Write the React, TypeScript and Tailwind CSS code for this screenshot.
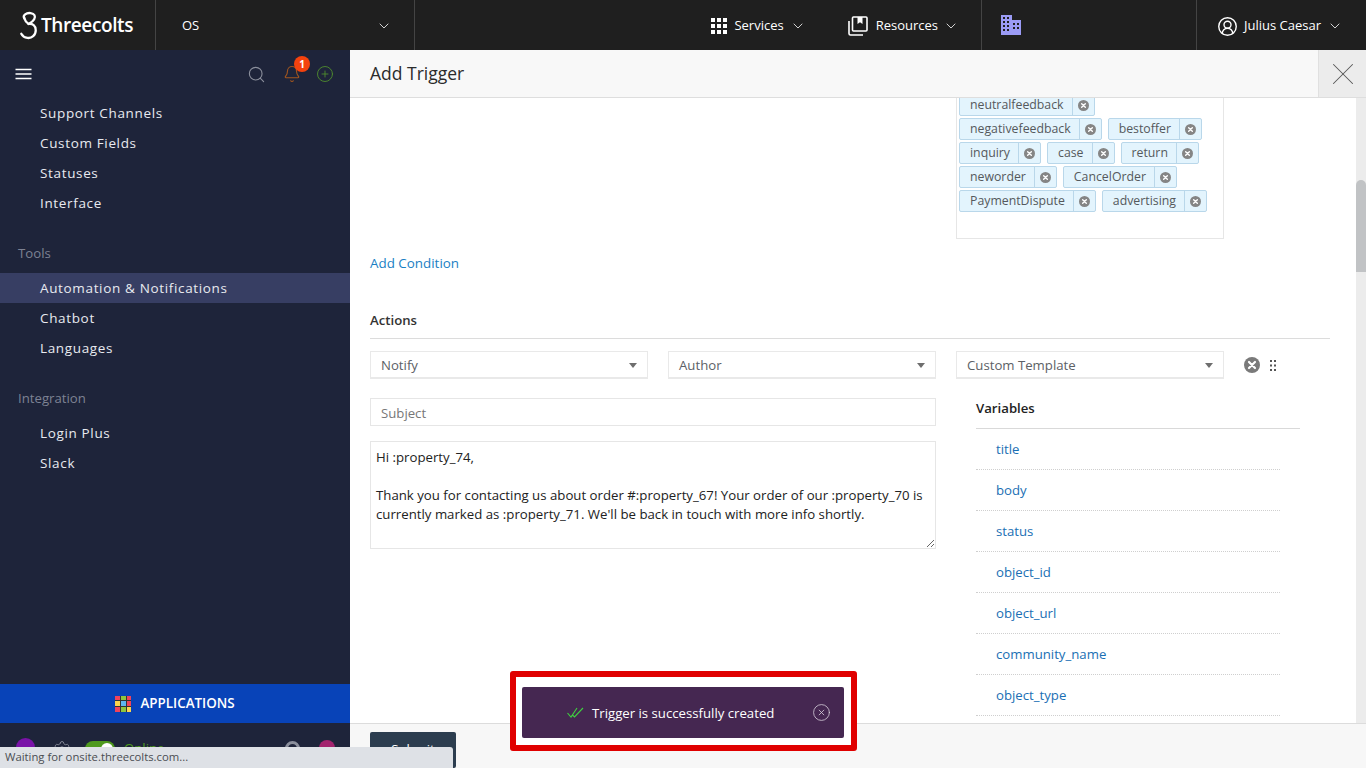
import React from 'react';
import { ChevronDown, CircleUserRound, Search, Bell, CirclePlus, X, Settings, CircleX } from 'lucide-react';

const setupLinks = ['Support Channels', 'Custom Fields', 'Statuses', 'Interface'];
const tagRows = [
  ['negativefeedback', 'bestoffer'],
  ['inquiry', 'case', 'return'],
  ['neworder', 'CancelOrder'],
  ['PaymentDispute', 'advertising'],
];
const variables = ['title', 'body', 'status', 'object_id', 'object_url', 'community_name', 'object_type', 'object_tags'];
const appColors = ['#f0435a', '#8cc63f', '#f0435a', '#fbd44d', '#5db5f0', '#f0435a', '#f0435a', '#8cc63f', '#fbd44d'];

const TagX = () => (
  <svg viewBox="0 0 12 12" className="h-[11px] w-[11px]">
    <circle cx="6" cy="6" r="6" fill="#858585" />
    <path d="M4 4l4 4M8 4l-4 4" stroke="#fff" strokeWidth="1.5" strokeLinecap="round" />
  </svg>
);

const Tag = ({ label }: { label: string }) => (
  <span className="flex h-[22px] items-center rounded-[2px] border border-[#b9d7ea] bg-[#e3f4fd] text-[12.300px] text-[#55595c]">
    <span className="pl-[10px] pr-[8px]">{label}</span>
    <span className="flex h-full w-[22px] items-center justify-center border-l border-[#b9d7ea]">
      <TagX />
    </span>
  </span>
);

const Select = ({ label, width }: { label: string; width: string }) => (
  <div className={`flex h-[28px] items-center justify-between border border-b-2 border-[#e9e9e9] bg-white pl-[10px] pr-[10px] pt-[2px] text-[#5c6166] ${width}`}>
    <span>{label}</span>
    <span className="h-0 w-0 border-x-[4px] border-t-[5px] border-x-transparent border-t-[#6e6e6e]" />
  </div>
);

const NavItem = ({ label, active }: { label: string; active?: boolean }) => (
  <div className={`flex h-[30px] items-center pl-[40px] text-[13.500px] tracking-[0.65px] text-[#e8eaf0] ${active ? 'bg-[#373e63]' : ''}`}>
    {label}
  </div>
);

export default function App() {
  return (
    <div className="relative flex h-screen w-full flex-col overflow-hidden bg-white font-['Open_Sans',sans-serif] text-[13.200px]">
      {/* Top bar */}
      <header className="flex h-[50px] shrink-0 items-stretch bg-[#1f1f1f] text-[13px] text-white">
        <div className="flex w-[156px] items-center gap-[3px] border-r border-[#444] pl-[19px]">
          <svg viewBox="0 0 18 28" className="h-[29px] w-[19px]" fill="none" stroke="#fff" strokeWidth="2.2" strokeLinecap="round" strokeLinejoin="round">
            <path d="M5 7C3 4 7 1.5 11 2c4 .5 5 3 3.500 6-1 2-3.500 3.500-5.500 4.500 4-.5 7 1.500 7 6 0 5-4 8-8 7.500-3-.5-5-2-6-4" />
            <path d="M5 7c.5 2 2 4 4 5.500" />
          </svg>
          <span className="text-[19px] font-semibold tracking-[-0.4px]">Threecolts</span>
        </div>
        <div className="flex w-[259px] items-center justify-between border-r border-[#444] pl-[26px] pr-[22px] pt-[2px]">
          <span>OS</span>
          <ChevronDown size={16} strokeWidth={1.2} />
        </div>
        <div className="flex w-[567px] items-center justify-end border-r border-[#444] pr-[22px] pt-[2px]">
          <svg viewBox="0 0 16 16" className="mr-[7px] h-[16px] w-[16px]" fill="#fff">
            <path d="M0 0h4v4H0zM6 0h4v4H6zM12 0h4v4h-4zM0 6h4v4H0zM6 6h4v4H6zM12 6h4v4h-4zM0 12h4v4H0zM6 12h4v4H6zM12 12h4v4h-4z" />
          </svg>
          <span>Services</span>
          <ChevronDown size={16} strokeWidth={1.2} className="ml-[6px]" />
          <svg viewBox="0 0 20 20" className="ml-[42px] mr-[8px] h-[20px] w-[20px]" fill="none" stroke="#fff" strokeWidth="1.6">
            <rect x="4.500" y="1" width="14.500" height="14" rx="1" />
            <path d="M1 5v12.500c0 .8.700 1.500 1.500 1.500H15" />
            <path d="M9.500 1v7l2.500-1.800L14.500 8V1z" fill="#fff" stroke="none" />
          </svg>
          <span>Resources</span>
          <ChevronDown size={16} strokeWidth={1.2} className="ml-[5px]" />
        </div>
        <div className="flex w-[215px] items-center border-r border-[#444] pl-[19px]">
          <svg viewBox="0 0 20 20" className="h-[20px] w-[20px]" fill="#9b9bf5">
            <path fillRule="evenodd" d="M0 0h11v5h9v15H0zM2 2v2h2V2zM6 2v2h2V2zM2 6v2h2V6zM6 6v2h2V6zM2 10v2h2v-2zM6 10v2h2v-2zM2 14v2h2v-2zM6 14v2h2v-2zM12 8v2h2V8zM16 8v2h2V8zM12 12v2h2v-2zM16 12v2h2v-2z" />
          </svg>
        </div>
        <div className="flex flex-1 items-center pl-[20px] pt-[2px]">
          <CircleUserRound size={21} strokeWidth={1.6} />
          <span className="ml-[6px]">Julius Caesar</span>
          <ChevronDown size={16} strokeWidth={1.2} className="ml-[6px]" />
        </div>
      </header>

      <div className="flex min-h-0 flex-1">
        {/* Sidebar */}
        <aside className="flex w-[350px] shrink-0 flex-col bg-[#1e243a]">
          <div className="flex h-[48px] shrink-0 items-center pl-[15px] pr-[16px]">
            <svg viewBox="0 0 16 12" className="h-[12px] w-[17px]" stroke="#fff" strokeWidth="1.600">
              <path d="M0 1.500h16M0 6h16M0 10.500h16" />
            </svg>
            <Search size={19} strokeWidth={1.4} className="ml-auto text-[#8b8f9c]" />
            <div className="relative ml-[17px]">
              <Bell size={18} strokeWidth={1.5} className="text-[#a2561f]" />
              <span className="absolute -right-[9px] -top-[9px] flex h-[16px] w-[16px] items-center justify-center rounded-full bg-[#f4420e] text-[10px] font-bold text-white">1</span>
            </div>
            <CirclePlus size={18} strokeWidth={1.2} className="ml-[15px] text-[#4f8c2e]" />
          </div>
          <nav className="flex-1">
            {setupLinks.map((l) => <NavItem key={l} label={l} />)}
            <div className="mt-[20px] flex h-[30px] items-center pl-[18px] pt-[2px] text-[#7d8293]">Tools</div>
            <div className="mt-[5px]">
              <NavItem label="Automation & Notifications" active />
              <NavItem label="Chatbot" />
              <NavItem label="Languages" />
            </div>
            <div className="mt-[20px] flex h-[30px] items-center pl-[18px] pt-[2px] text-[#7d8293]">Integration</div>
            <div className="mt-[5px]">
              <NavItem label="Login Plus" />
              <NavItem label="Slack" />
            </div>
          </nav>
          <div className="flex h-[39px] shrink-0 items-center justify-center gap-[9px] bg-[#0843b8]">
            <div className="grid h-[16px] w-[16px] grid-cols-3 gap-[1px] bg-[#333]">
              {appColors.map((c, i) => <span key={i} style={{ backgroundColor: c }} />)}
            </div>
            <span className="text-[13.400px] font-semibold text-white">APPLICATIONS</span>
          </div>
          <div className="flex h-[45px] shrink-0 items-start pl-[16px] pr-[15px] pt-[15px]">
            <span className="h-[19px] w-[19px] rounded-full bg-[#7a12a8]" />
            <Settings size={18} strokeWidth={1.2} className="ml-[18px] mt-[2px] text-[#8b8f9c]" />
            <span className="ml-[14px] mt-[3px] flex h-[16px] w-[30px] justify-end rounded-full bg-[#4f9a1e] p-[2px]">
              <span className="h-[12px] w-[12px] rounded-full bg-white" />
            </span>
            <span className="ml-[9px] mt-[1px] text-[#4f9a1e]">Online</span>
            <span className="ml-auto mt-[3px] h-[15px] w-[15px] rounded-full border-[3px] border-[#8b8f9c]" />
            <span className="ml-[19px] mt-[2px] h-[16px] w-[16px] rounded-full bg-[#a3236e]" />
          </div>
        </aside>

        {/* Main panel */}
        <main className="flex min-w-0 flex-1 flex-col">
          <div className="flex h-[48px] shrink-0 items-center border-b border-[#dedede] bg-[#f8f8f8] pl-[20px]">
            <h1 className="text-[17.500px] text-[#2b2b2b]">Add Trigger</h1>
            <button className="ml-auto flex h-full w-[48px] items-center justify-center border-l border-[#e0e0e0] bg-[#ececec] text-[#555]">
              <X size={38} strokeWidth={0.65} />
            </button>
          </div>

          <div className="flex min-h-0 flex-1">
            <div className="min-w-0 flex-1 overflow-hidden pl-[20px] pr-[26px]">
              <div className="-mt-[4px] ml-[586px] h-[145px] w-[268px] border border-t-0 border-[#e6e6e6] pl-[2px]">
                <div className="flex">
                  <Tag label="neutralfeedback" />
                </div>
                {tagRows.map((row) => (
                  <div key={row[0]} className="mt-[2px] flex gap-[6px]">
                    {row.map((t) => <Tag key={t} label={t} />)}
                  </div>
                ))}
              </div>

              <a className="mt-[14px] block h-[20px] text-[13.400px] leading-[20px] text-[#1a7fc4]">Add Condition</a>

              <div className="mt-[37px] border-b border-[#dcdcdc] pb-[8px] font-semibold leading-[20px] text-[#333]">Actions</div>

              <div className="mt-[12px] flex items-center gap-[20px]">
                <Select label="Notify" width="w-[278px]" />
                <Select label="Author" width="w-[268px]" />
                <Select label="Custom Template" width="w-[268px]" />
                <div className="flex items-center gap-[10px]">
                  <CircleXFilled />
                  <svg viewBox="0 0 6 11" className="h-[11px] w-[6px]" fill="#555">
                    <path d="M0 0h2v2H0zM4 0h2v2H4zM0 4.500h2v2H0zM4 4.500h2v2H4zM0 9h2v2H0zM4 9h2v2H4z" />
                  </svg>
                </div>
              </div>

              <div className="mt-[19px] flex">
                <div className="w-[566px] shrink-0">
                  <input
                    readOnly
                    placeholder="Subject"
                    className="block h-[28px] w-full border border-[#e6e6e6] px-[10px] pt-[2px] text-[#333] outline-none placeholder:text-[#777]"
                  />
                  <textarea
                    readOnly
                    className="mt-[15px] block h-[108px] w-full border border-[#e6e6e6] px-[5px] pb-[5px] pt-[6px] text-[13.230px] leading-[19px] text-[#222] outline-none"
                    defaultValue={"Hi :property_74,\n\nThank you for contacting us about order #:property_67! Your order of our :property_70 is currently marked as :property_71. We'll be back in touch with more info shortly."}
                  />
                </div>
                <div className="ml-[40px] w-[324px] shrink-0">
                  <div className="h-[31px] border-b border-[#d9d9d9] font-semibold leading-[20px] text-[#222]">Variables</div>
                  <ul className="w-[304px]">
                    {variables.map((v) => (
                      <li key={v} className="flex h-[41px] items-center border-b border-dotted border-[#cfcfcf] pl-[20px] pt-[2px] text-[#1a6fb4]">{v}</li>
                    ))}
                  </ul>
                </div>
              </div>
            </div>
            {/* Scrollbar */}
            <div className="w-[10px] shrink-0 bg-[#ececec]">
              <div className="mt-[82px] h-[92px] rounded-t-[5px] bg-[#c1c3c5]" />
            </div>
          </div>

          <div className="h-[45px] shrink-0 border-t border-[#dcdcdc] bg-[#f7f7f7] pl-[20px] pt-[8px]">
            <button className="h-[36px] w-[86px] rounded-[2px] bg-[#2c3d4f] text-white">Submit</button>
          </div>
        </main>
      </div>

      {/* Browser status text */}
      <div className="absolute bottom-0 left-0 flex h-[21px] w-[453px] items-center rounded-tr-[3px] bg-[#dee1e6] pl-[5px] text-[11.300px] text-[#4a4d52]">
        Waiting for onsite.threecolts.com...
      </div>

      {/* Toast with its highlight frame */}
      <div className="absolute left-[510px] top-[671px] rounded-[3px] border-[6px] border-[#e00000] bg-white pb-[7px] pl-[6px] pr-[7px] pt-[10px]">
        <div className="flex h-[51px] w-[322px] items-center rounded-[2px] bg-[#452751] pl-[45px] text-white">
          <svg viewBox="0 0 17 11" className="h-[11px] w-[17px]" fill="none" stroke="#3fd13f" strokeWidth="1.100">
            <path d="M.5 6l3.500 4L10 1M5.500 8l2 2L16 1" />
          </svg>
          <span className="ml-[8px] pt-[2px] text-[13.200px]">Trigger is successfully created</span>
          <CircleX size={19} strokeWidth={1} className="ml-auto mr-[13px] text-[#d8d0dc]" />
        </div>
      </div>
    </div>
  );
}

function CircleXFilled() {
  return (
    <svg viewBox="0 0 16 16" className="h-[16px] w-[16px]">
      <circle cx="8" cy="8" r="8" fill="#7a7a7a" />
      <path d="M5 5l6 6M11 5l-6 6" stroke="#fff" strokeWidth="2.200" strokeLinecap="round" />
    </svg>
  );
}
